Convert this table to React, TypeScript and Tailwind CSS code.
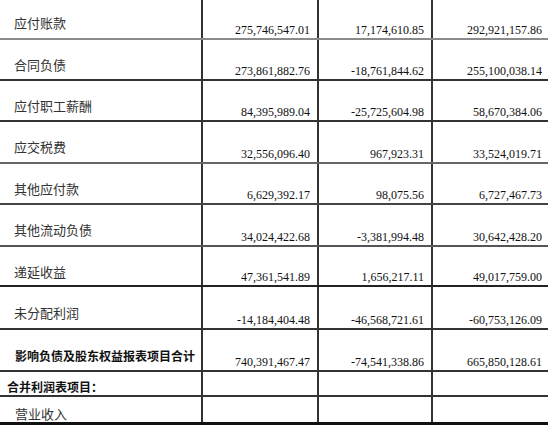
import React from "react";

type Row = {
  label: string;
  vals: string[];
  cls: string;
  labelCls: string;
};

const normal = "pl-[14px] pt-[17px] text-[13px] text-[#333]";

const rows: Row[] = [
  { label: "应付账款", vals: ["275,746,547.01", "17,174,610.85", "292,921,157.86"], cls: "h-[40px] border-b-2 border-[#8a8a8a]", labelCls: "pl-[14px] pt-[15px] text-[13px] text-[#333]" },
  { label: "合同负债", vals: ["273,861,882.76", "-18,761,844.62", "255,100,038.14"], cls: "h-[41px] border-b-2 border-[#333]", labelCls: normal },
  { label: "应付职工薪酬", vals: ["84,395,989.04", "-25,725,604.98", "58,670,384.06"], cls: "h-[41px] border-b-2 border-[#333]", labelCls: normal },
  { label: "应交税费", vals: ["32,556,096.40", "967,923.31", "33,524,019.71"], cls: "h-[42px] border-b-2 border-[#666]", labelCls: normal },
  { label: "其他应付款", vals: ["6,629,392.17", "98,075.56", "6,727,467.73"], cls: "h-[41px] border-b-2 border-[#444]", labelCls: normal },
  { label: "其他流动负债", vals: ["34,024,422.68", "-3,381,994.48", "30,642,428.20"], cls: "h-[42px] border-b-2 border-[#555]", labelCls: normal },
  { label: "递延收益", vals: ["47,361,541.89", "1,656,217.11", "49,017,759.00"], cls: "h-[40px] border-b-2 border-[#222]", labelCls: normal },
  { label: "未分配利润", vals: ["-14,184,404.48", "-46,568,721.61", "-60,753,126.09"], cls: "h-[43px] border-b-2 border-[#333]", labelCls: "pl-[14px] pt-[18px] text-[13px] text-[#333]" },
  { label: "影响负债及股东权益报表项目合计", vals: ["740,391,467.47", "-74,541,338.86", "665,850,128.61"], cls: "h-[42px] border-b-2 border-[#333]", labelCls: "pl-[15px] pt-[18px] text-[12px] font-bold text-[#111]" },
  { label: "合并利润表项目：", vals: ["", "", ""], cls: "h-[25px] border-b-2 border-[#333]", labelCls: "pl-[7px] pt-[7px] text-[12px] font-bold text-[#111]" },
  { label: "营业收入", vals: ["", "", ""], cls: "h-[28px] border-b-[3px] border-[#111]", labelCls: "pl-[15px] pt-[9px] text-[13px] text-[#333]" },
];

const widths = ["w-[116px] border-r-2 border-[#333]", "w-[114px] border-r-2 border-[#333]", "w-[116px]"];

export default function App() {
  return (
    <div className="w-[550px] h-[427px] bg-white overflow-hidden">
      <div className="w-[548px] flex flex-col">
        {rows.map((r, i) => (
          <div key={i} className={`flex ${r.cls}`}>
            <div
              className={`w-[203px] shrink-0 border-r-2 border-[#333] leading-[18px] font-['Liberation_Serif','Noto_Sans_CJK_SC',serif] ${r.labelCls}`}
            >
              {r.label}
            </div>
            {r.vals.map((v, j) => (
              <div
                key={j}
                className={`${widths[j]} shrink-0 flex items-end justify-end pr-[7px] pb-[1px] text-[12px] leading-[14px] text-[#111] font-['Liberation_Serif',serif]`}
              >
                {v}
              </div>
            ))}
          </div>
        ))}
      </div>
    </div>
  );
}
